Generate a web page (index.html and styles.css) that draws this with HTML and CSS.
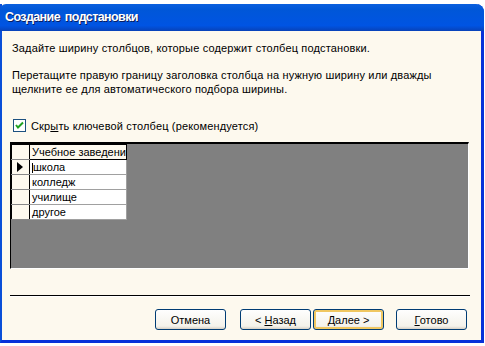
FILE: index.html
```html
<!DOCTYPE html>
<html lang="ru">
<head>
    <meta charset="UTF-8">
    <title>Создание подстановки</title>
    <link rel="stylesheet" href="styles.css">
</head>
<body>
    <div class="window">
        <div class="titlebar">Создание подстановки</div>
        <div class="client">
            <p class="intro">Задайте ширину столбцов, которые содержит столбец подстановки.</p>
            <p class="hint">Перетащите правую границу заголовка столбца на нужную ширину или дважды<br>щелкните ее для автоматического подбора ширины.</p>
            <label class="check">
                <span class="box"><svg width="9" height="9" viewBox="0 0 9 9"><path d="M1 4 L3 6.5 L8 1.5" fill="none" stroke="#21a121" stroke-width="2"/></svg></span>
                <span>Скр<u>ы</u>ть ключевой столбец (рекомендуется)</span>
            </label>
            <div class="grid">
                <table class="sheet">
                    <tr><td class="sel"></td><td class="head">Учебное заведени</td></tr>
                    <tr><td class="sel"><span class="arrow"></span></td><td><span class="caret"></span>школа</td></tr>
                    <tr><td class="sel"></td><td>колледж</td></tr>
                    <tr><td class="sel"></td><td>училище</td></tr>
                    <tr><td class="sel"></td><td>другое</td></tr>
                </table>
            </div>
            <div class="rule"></div>
            <div class="buttons">
                <button class="btn">Отмена</button>
                <div class="pair">
                    <button class="btn">&lt; <u>Н</u>азад</button>
                    <button class="btn default"><u>Д</u>алее &gt;</button>
                </div>
                <button class="btn"><u>Г</u>отово</button>
            </div>
        </div>
    </div>
</body>
</html>
```

FILE: styles.css
```css
body {
    margin: 0;
    padding: 0;
    background: #fff;
    font-family: Tahoma, 'Liberation Sans', sans-serif;
    font-size: 11px;
    color: #000;
}
.window {
    margin-top: 4px;
    width: 479px;
    height: 336px;
    border: 3px solid #0831d9;
    border-top: none;
    border-left: 2px solid #0a4fd8;
    border-radius: 0 8px 0 0;
    background: #fdf9ee;
    display: flex;
    flex-direction: column;
}
.titlebar {
    height: 27px;
    line-height: 27px;
    padding-left: 5px;
    margin: 0 -3px 0 -2px;
    background: linear-gradient(#0a5fde, #0057d8 20%, #0054e3 80%, #0842b8);
    border-radius: 6px 8px 0 0;
    color: #fff;
    font-family: 'Liberation Sans', sans-serif;
    font-weight: bold;
    font-size: 12.5px;
    letter-spacing: -0.6px;
    word-spacing: 2px;
    text-shadow: 1px 1px #0a1e60;
}
.client {
    flex: 1;
    padding: 0 10px 0 8px;
    display: flex;
    flex-direction: column;
    letter-spacing: 0.15px;
}
.intro {
    margin: 11px 0 0 2px;
}
.hint {
    margin: 14px 0 0 2px;
    line-height: 14px;
}
.check {
    display: flex;
    align-items: center;
    gap: 5px;
    margin: 23px 0 0 3px;
}
.box {
    width: 11px;
    height: 11px;
    border: 1px solid #1c5180;
    background: #fff;
    display: flex;
    align-items: center;
    justify-content: center;
}
.grid {
    margin-top: 10px;
    width: 457px;
    height: 124px;
    background: #808080;
    border-top: 2px solid #000;
    border-left: 1px solid #000;
    border-right: 1px solid #fff;
    border-bottom: 1px solid #fff;
}
.sheet {
    border-collapse: collapse;
    letter-spacing: 0;
}
.sheet td {
    height: 14px;
    padding: 0 0 0 2px;
    background: #fff;
    border: 1px solid #a0a0a0;
    width: 94px;
    max-width: 94px;
    white-space: nowrap;
    overflow: hidden;
    line-height: 14px;
}
.sheet td.head {
    background: #fdf9ee;
    border: 1px solid #000;
}
.sheet td.sel {
    width: 17px;
    padding: 0;
    background: #fdf9ee;
    border: 1px solid #000;
    border-bottom-color: #888;
}
.arrow {
    display: block;
    margin-left: 5px;
    width: 0;
    height: 0;
    border-top: 5px solid transparent;
    border-bottom: 5px solid transparent;
    border-left: 6px solid #000;
}
.caret {
    display: inline-block;
    width: 1px;
    height: 10px;
    background: #000;
    vertical-align: middle;
}
.rule {
    margin-top: 26px;
    height: 1px;
    background: #000;
    width: 460px;
    border-bottom: 1px solid #fff;
}
.buttons {
    margin-top: 12px;
    display: flex;
    align-items: center;
    padding-left: 145px;
    letter-spacing: 0;
}
.pair {
    display: flex;
    gap: 2px;
    margin-left: 14px;
    margin-right: 12px;
}
.btn {
    width: 71px;
    height: 21px;
    padding: 0;
    font-family: Tahoma, 'Liberation Sans', sans-serif;
    font-size: 11px;
    color: #000;
    background: linear-gradient(#fefefe, #f4f2ea 85%, #d6d0c5);
    border: 1px solid #003c74;
    border-radius: 3px;
}
.btn.default {
    box-shadow: inset 0 0 0 2px #f0c761;
}
```
